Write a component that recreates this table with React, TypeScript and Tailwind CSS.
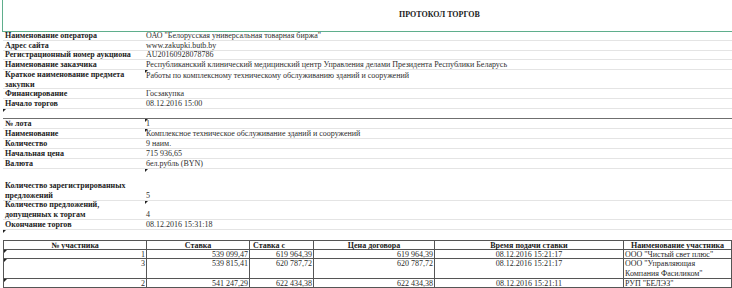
import React from "react";

type RowProps = {
  h: string;
  label?: React.ReactNode;
  value?: React.ReactNode;
  top?: boolean;
  dark?: boolean;
  none?: boolean;
  markLeft?: boolean;
  markValue?: boolean;
};

function Mark({ className }: { className: string }) {
  return (
    <span
      className={
        "absolute w-0 h-0 border-t-[3px] border-r-[3px] border-t-[#222] border-r-transparent " +
        className
      }
    />
  );
}

function Row({ h, label, value, top, dark, none, markLeft, markValue }: RowProps) {
  const line = none ? "" : dark ? "border-b border-[#6f6f6f]" : "border-b border-[#e4e4e4]";
  return (
    <div className={`relative flex ${top ? "items-start" : "items-end"} ${h} ${line}`}>
      {markLeft && <Mark className="left-0 top-0" />}
      <div className="w-[143px] pl-[2px] font-bold text-[#1c1c1c] leading-[9.5px]">{label}</div>
      <div className="relative flex-1 h-full flex items-end">
        {markValue && <Mark className="left-[-1px] top-0" />}
        <div className={`w-full leading-[9.5px] text-[#2e2e2e] ${top ? "self-start pt-[1px]" : ""}`}>{value}</div>
      </div>
    </div>
  );
}

const bids = [
  { n: "1", a: "539 099,47", b: "619 964,39", c: "619 964,39", t: "08.12.2016 15:21:17", who: ['ООО "Чистый свет плюс"'], h: "h-[8px]" },
  { n: "3", a: "539 815,41", b: "620 787,72", c: "620 787,72", t: "08.12.2016 15:21:17", who: ['ООО "Управляющая', 'Компания Фасиликом"'], h: "h-[19px]" },
  { n: "2", a: "541 247,29", b: "622 434,38", c: "622 434,38", t: "08.12.2016 15:21:11", who: ['РУП "БЕЛЭЗ"'], h: "h-[8px]" },
];

const cell = "border border-[#555] p-0 align-top";

export default function App() {
  return (
    <div className="w-[732px] h-[288px] overflow-hidden bg-white font-['Liberation_Serif',serif] text-[8px] text-[#222]">
      <div className="ml-[2px] h-[32px] border-l border-b border-[#5fae8c] pl-[396px] pt-[10px] leading-[10px] font-bold text-[#1a1a1a]">
        ПРОТОКОЛ ТОРГОВ
      </div>

      <div className="ml-[3px]">
        <Row h="h-[9px]" label="Наименование оператора" value={'ОАО "Белорусская универсальная товарная биржа"'} />
        <Row h="h-[10px]" label="Адрес сайта" value="www.zakupki.butb.by" />
        <Row h="h-[9px]" label="Регистрационный номер аукциона" value="AU20160928078786" />
        <Row
          h="h-[10px]"
          label="Наименование заказчика"
          value="Республиканский клинический медицинский центр Управления делами Президента Республики Беларусь"
        />
        <Row
          h="h-[19px]"
          top
          markValue
          label={<>Краткое наименование предмета<br />закупки</>}
          value="Работы по комплексному техническому обслуживанию зданий и сооружений"
        />
        <Row h="h-[10px]" label="Финансирование" value="Госзакупка" />
        <Row h="h-[10px]" label="Начало торгов" value="08.12.2016 15:00" />
        <Row h="h-[10px]" dark markLeft />
        <Row h="h-[10px]" markValue label="№ лота" value="1" />
        <Row h="h-[10px]" markValue label="Наименование" value="Комплексное техническое обслуживание зданий и сооружений" />
        <Row h="h-[10px]" label="Количество" value="9 наим." />
        <Row h="h-[10px]" label="Начальная цена" value="715 936,65" />
        <Row h="h-[10px]" label="Валюта" value="бел.рубль (BYN)" />
        <Row
          h="h-[32px]"
          markValue
          label={<>Количество зарегистрированных<br />предложений</>}
          value="5"
        />
        <Row
          h="h-[19px]"
          markValue
          label={<>Количество предложений,<br />допущенных к торгам</>}
          value="4"
        />
        <Row h="h-[10px]" label="Окончание торгов" value="08.12.2016 15:31:18" />
        <Row h="h-[10px]" none markLeft />

        <table className="w-[728px] table-fixed border-collapse text-[#2a2a2a]">
          <colgroup>
            <col className="w-[143px]" />
            <col className="w-[103px]" />
            <col className="w-[64px]" />
            <col className="w-[121px]" />
            <col className="w-[189px]" />
            <col className="w-[108px]" />
          </colgroup>
          <thead>
            <tr className="font-bold text-[#1a1a1a]">
              <th className={cell}>
                <div className="h-[8px] leading-[9px] text-center">№ участника</div>
              </th>
              <th className={cell}>
                <div className="h-[8px] leading-[9px] text-center">Ставка</div>
              </th>
              <th className={cell}>
                <div className="h-[8px] leading-[9px] pl-[3px] text-left whitespace-nowrap overflow-hidden">Ставка с</div>
              </th>
              <th className={cell}>
                <div className="h-[8px] leading-[9px] text-center">Цена договора</div>
              </th>
              <th className={cell}>
                <div className="h-[8px] leading-[9px] text-center">Время подачи ставки</div>
              </th>
              <th className={cell}>
                <div className="h-[8px] leading-[9px] text-center">Наименование участника</div>
              </th>
            </tr>
          </thead>
          <tbody>
            {bids.map((b, i) => (
              <tr key={i}>
                <td className={`relative ${cell}`}>
                  <Mark className="left-0 top-0" />
                  <div className={`${b.h} leading-[9px] pr-[1px] text-right`}>{b.n}</div>
                </td>
                <td className={cell}>
                  <div className={`${b.h} leading-[9px] pr-[1px] text-right`}>{b.a}</div>
                </td>
                <td className={cell}>
                  <div className={`${b.h} leading-[9px] pr-[1px] text-right`}>{b.b}</div>
                </td>
                <td className={cell}>
                  <div className={`${b.h} leading-[9px] pr-[1px] text-right`}>{b.c}</div>
                </td>
                <td className={cell}>
                  <div className={`${b.h} leading-[9px] text-center`}>{b.t}</div>
                </td>
                <td className={cell}>
                  <div className={`${b.h} leading-[9px] pl-[1px] text-left`}>
                    {b.who.map((w, j) => (
                      <div key={j} className={j > 0 ? "mt-[1px]" : ""}>{w}</div>
                    ))}
                  </div>
                </td>
              </tr>
            ))}
          </tbody>
        </table>
      </div>
    </div>
  );
}
